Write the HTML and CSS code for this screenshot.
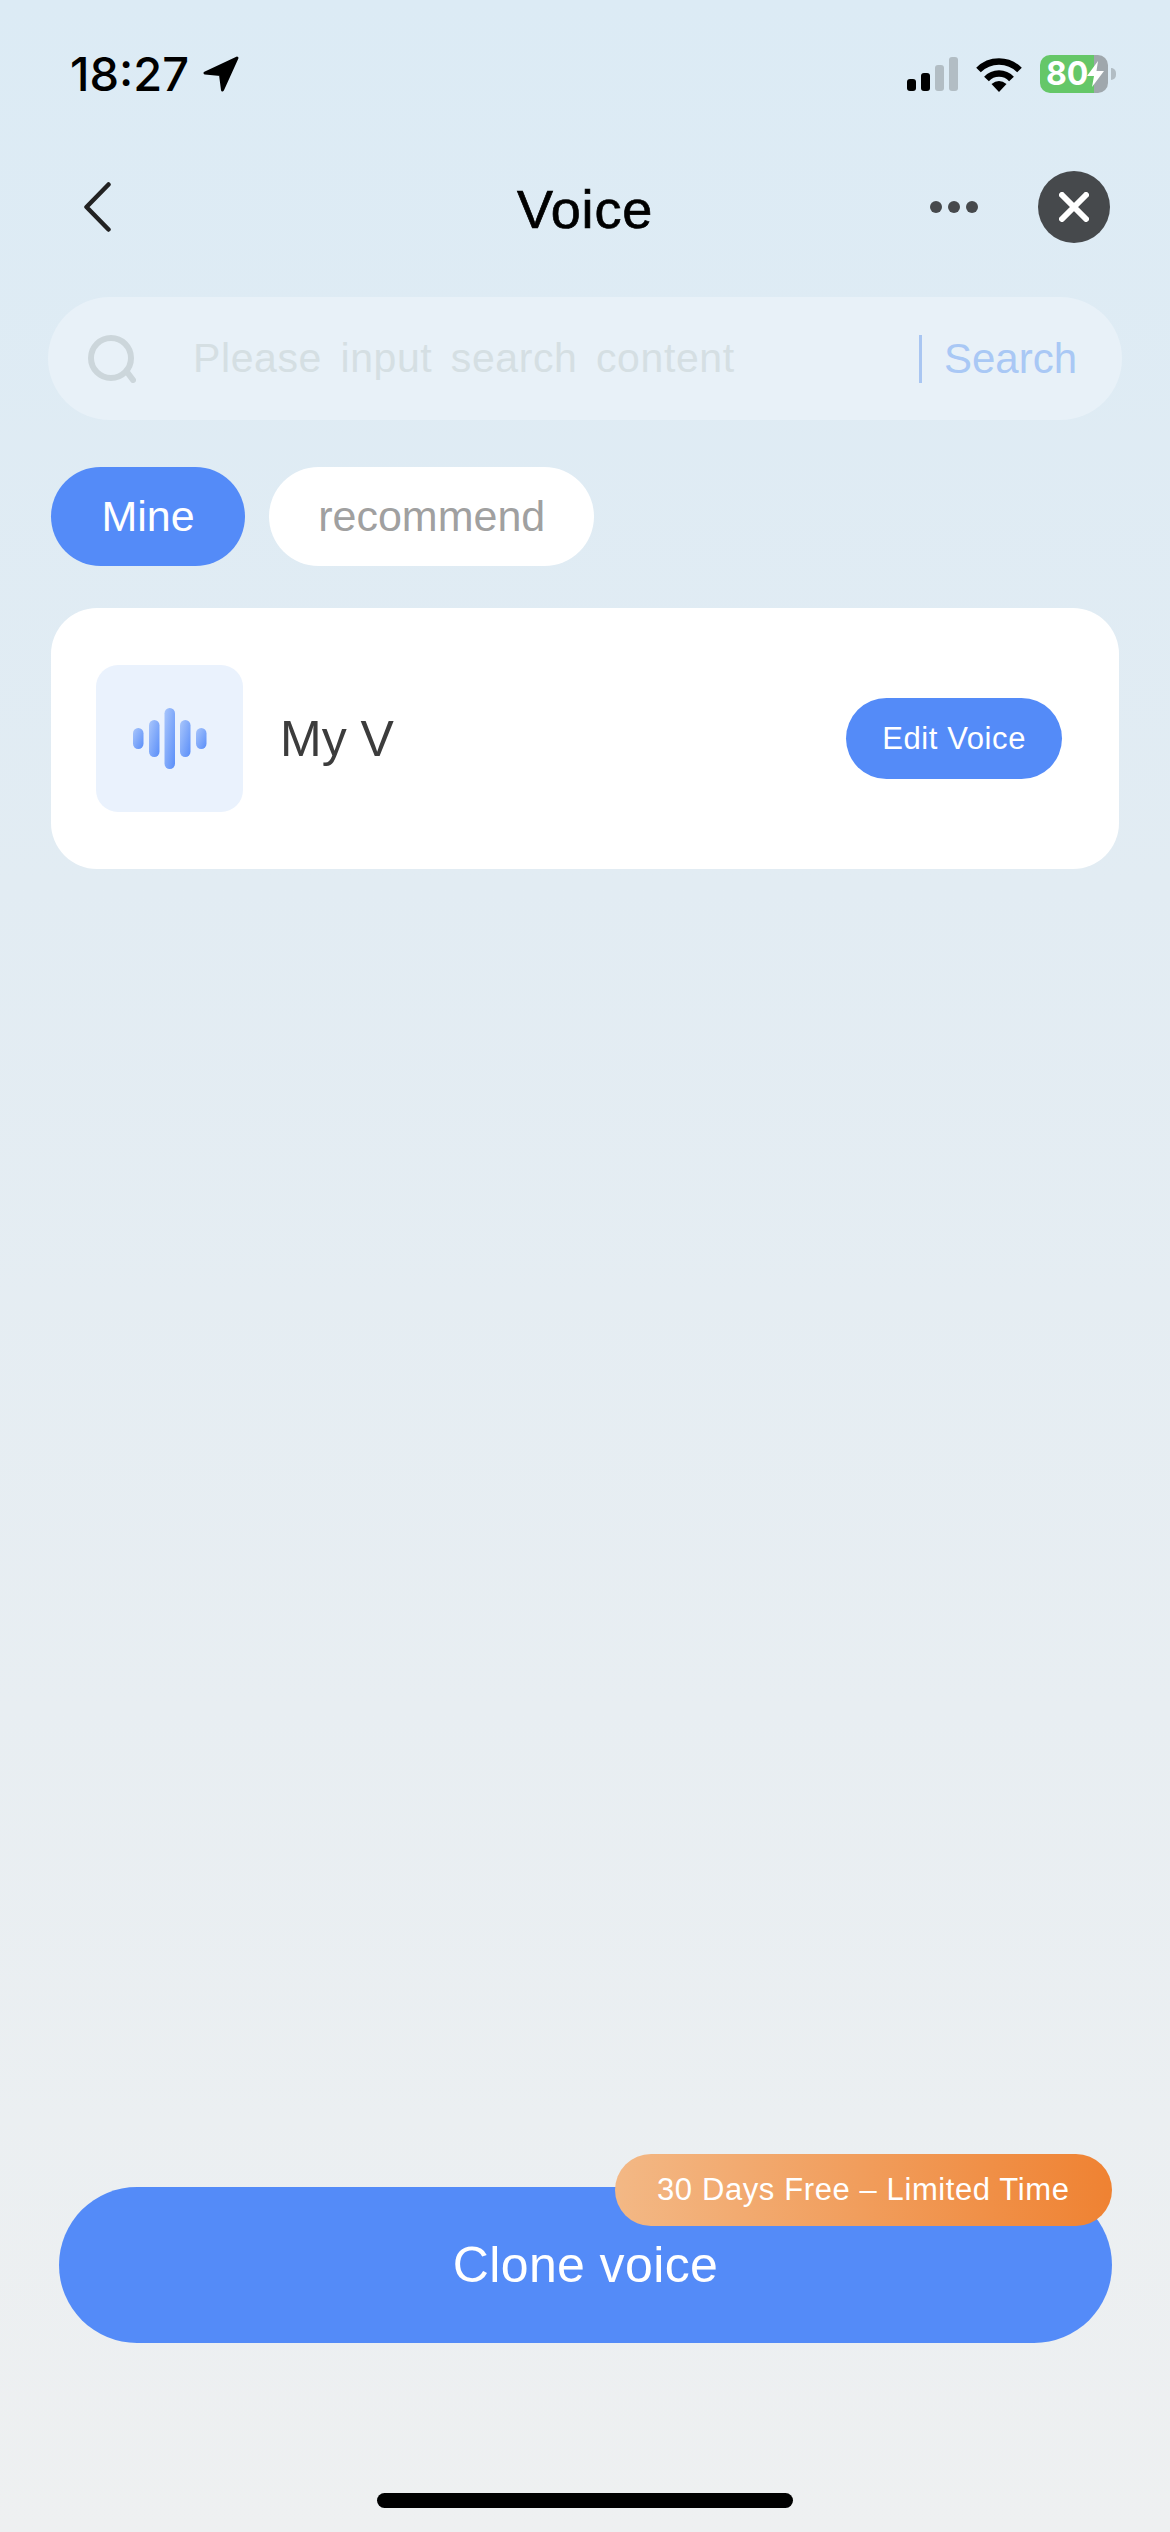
FILE: index.html

```html
<!DOCTYPE html>
<html>
<head>
<title>Voice</title>
<meta name="viewport" content="width=device-width, initial-scale=1">
<link rel="stylesheet" href="styles.css">
</head>
<body>
  <div class="page">
    <div class="status-bar">
      <div class="clock">
        <span class="time">18:27</span>
        <svg class="location" width="36" height="36" viewBox="0 0 36 36"><path d="M34 2 2 17 17.500 18.500 19.500 34Z" fill="#000" stroke="#000" stroke-width="3" stroke-linejoin="round"/></svg>
      </div>
      <div class="status-icons">
        <svg class="signal" width="51" height="34" viewBox="0 0 51 34">
          <rect x="0" y="22" width="9" height="12" rx="3" fill="#000"/>
          <rect x="14" y="16" width="9" height="18" rx="3" fill="#000"/>
          <rect x="28" y="8" width="9" height="26" rx="3" fill="#b2bdc4"/>
          <rect x="42" y="0" width="9" height="34" rx="3" fill="#b2bdc4"/>
        </svg>
        <svg class="wifi" width="48" height="36" viewBox="0 0 48 36">
          <path d="M3.500 14 A29 29 0 0 1 44.500 14" fill="none" stroke="#000" stroke-width="6.500"/>
          <path d="M11.500 23 A17 17 0 0 1 36.500 23" fill="none" stroke="#000" stroke-width="6.500"/>
          <path d="M24 36 16.500 28Q24 22 31.500 28Z" fill="#000"/>
        </svg>
        <div class="battery">
          <div class="battery-body">
            <span class="battery-level">80</span>
            <svg width="17" height="26" viewBox="0 0 17 26"><path d="M11 0 0 15H7L5 26 17 10H9.500Z" fill="#fff"/></svg>
          </div>
          <div class="battery-nub"></div>
        </div>
      </div>
    </div>

    <div class="nav">
      <svg class="back" width="27" height="50" viewBox="0 0 27 50"><path d="M24.500 2.500 2.500 25 24.500 47.500" fill="none" stroke="#222" stroke-width="4.500" stroke-linecap="round" stroke-linejoin="round"/></svg>
      <h1 class="title">Voice</h1>
      <div class="nav-actions">
        <div class="dots"><span></span><span></span><span></span></div>
        <div class="close">
          <svg width="30" height="30" viewBox="0 0 30 30"><path d="M3 3 27 27M27 3 3 27" stroke="#fff" stroke-width="6" stroke-linecap="round"/></svg>
        </div>
      </div>
    </div>

    <div class="search">
      <svg width="48" height="48" viewBox="0 0 48 48"><circle cx="23" cy="23" r="20" fill="none" stroke="#ccd6db" stroke-width="6"/><path d="M39 37 45 45" stroke="#ccd6db" stroke-width="6" stroke-linecap="round"/></svg>
      <span class="placeholder">Please input search content</span>
      <span class="search-divider"></span>
      <span class="search-button">Search</span>
    </div>

    <div class="tabs">
      <div class="tab active">Mine</div>
      <div class="tab">recommend</div>
    </div>

    <div class="card">
      <div class="thumb">
        <svg width="74" height="62" viewBox="0 0 74 62">
          <defs>
            <linearGradient id="wave" x1="0" y1="0" x2="1" y2="1">
              <stop offset="0" stop-color="#a9c6fb"/>
              <stop offset="1" stop-color="#5a8ef9"/>
            </linearGradient>
          </defs>
          <g fill="url(#wave)">
            <rect x="0" y="20" width="10.500" height="21" rx="5.200"/>
            <rect x="16" y="12" width="10.500" height="37" rx="5.200"/>
            <rect x="31.500" y="0" width="10.500" height="61" rx="5.200"/>
            <rect x="47" y="12" width="10.500" height="37" rx="5.200"/>
            <rect x="63" y="20" width="10.500" height="21" rx="5.200"/>
          </g>
        </svg>
      </div>
      <span class="voice-name">My V</span>
      <div class="edit-button">Edit Voice</div>
    </div>

    <div class="spacer"></div>

    <div class="clone-button">
      Clone voice
      <div class="promo">30 Days Free – Limited Time</div>
    </div>

    <div class="home-bar"></div>
  </div>
</body>
</html>
```

FILE: styles.css

```css
* { box-sizing: border-box; }
body { margin: 0; font-family: "Liberation Sans", Arial, sans-serif; }
.page { width: 1170px; height: 2532px; display: flex; flex-direction: column; background: linear-gradient(180deg, #dcebf5 0%, #e2ecf3 35%, #eef0f1 100%); }

.status-bar { height: 148px; flex: none; display: flex; align-items: center; justify-content: space-between; padding: 0 54px 0 70px; }
.clock { display: flex; align-items: center; gap: 14px; }
.time { font-family: Inter, sans-serif; font-size: 47px; font-weight: 500; line-height: 36px; color: #000; }
.status-icons { display: flex; align-items: center; gap: 17px; }
.battery { display: flex; align-items: center; gap: 3px; }
.battery-body { width: 68px; height: 38px; border-radius: 10px; display: flex; align-items: center; padding-left: 6px; background: linear-gradient(90deg, #65c768 79%, #9fa7ac 79%); }
.battery-level { font-family: Inter, sans-serif; font-size: 32px; font-weight: 700; line-height: 38px; color: #fff; width: 41px; }
.battery-nub { width: 5px; height: 12px; background: #b2bdc4; border-radius: 0 6px 6px 0; }

.nav { height: 118px; flex: none; display: grid; grid-template-columns: 1fr auto 1fr; align-items: center; padding: 0 60px; }
.back { margin-left: 24px; }
.title { margin: 0; padding-top: 3px; font-size: 54px; font-weight: 400; letter-spacing: 0.8px; color: #000; -webkit-text-stroke: 0.7px #000; }
.nav-actions { display: flex; align-items: center; justify-content: flex-end; gap: 60px; }
.dots { display: flex; gap: 6px; }
.dots span { width: 12px; height: 12px; border-radius: 50%; background: #46494c; }
.close { width: 72px; height: 72px; border-radius: 50%; background: #46494c; display: flex; align-items: center; justify-content: center; }

.search { height: 123px; flex: none; margin: 31px 48px 0; padding: 0 45px 0 40px; border-radius: 62px; background: #e8f1f8; display: flex; align-items: center; }
.placeholder { margin-left: 57px; font-size: 41px; letter-spacing: 0.6px; word-spacing: 6.500px; color: #d5dfe3; }
.search-divider { margin-left: auto; width: 3px; height: 48px; background: #a9c6f2; }
.search-button { margin-left: 22px; font-size: 42px; color: #a9c8f5; }

.tabs { flex: none; display: flex; gap: 24px; margin: 47px 0 0 51px; }
.tab { height: 99px; padding: 0 49px; border-radius: 50px; background: #fff; font-size: 43px; line-height: 99px; color: #a0a0a0; }
.tab.active { padding: 0 50.500px; background: #548bf8; color: #fff; }

.card { height: 261px; flex: none; margin: 42px 51px 0; padding: 0 57px 0 45px; border-radius: 46px; background: #fff; display: flex; align-items: center; }
.thumb { width: 147px; height: 147px; border-radius: 22px; background: #eaf2fd; display: flex; align-items: center; justify-content: center; }
.voice-name { margin-left: 37px; font-size: 50px; color: #3c3c3c; }
.edit-button { margin-left: auto; height: 81px; padding: 0 36px; border-radius: 41px; background: #548bf8; font-size: 31px; letter-spacing: 0.6px; line-height: 81px; color: #fff; }

.spacer { flex: 1; }

.clone-button { position: relative; height: 156px; flex: none; margin: 0 58px 0 59px; border-radius: 78px; background: #548bf8; font-size: 50px; letter-spacing: 0.4px; line-height: 156px; text-align: center; color: #fff; }
.promo { position: absolute; top: -33px; right: 0; height: 72px; padding: 0 42.500px; border-radius: 36px; background: linear-gradient(90deg, #f3b885, #ef8232); font-size: 31px; letter-spacing: 0.6px; line-height: 72px; color: #fff; }

.home-bar { flex: none; width: 416px; height: 15px; margin: 150px auto 24px; border-radius: 8px; background: #000; }
```
